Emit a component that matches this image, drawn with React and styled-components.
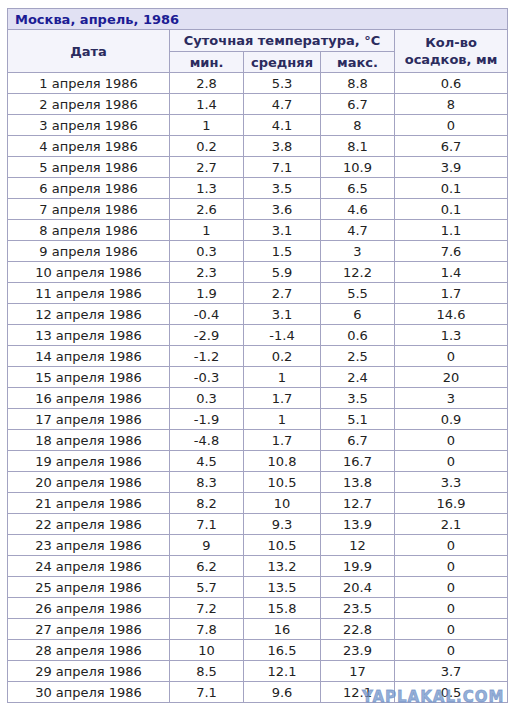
import React from "react";
import styled, { createGlobalStyle } from "styled-components";

const rows = [
  [2.8, 5.3, 8.8, 0.6],
  [1.4, 4.7, 6.7, 8],
  [1, 4.1, 8, 0],
  [0.2, 3.8, 8.1, 6.7],
  [2.7, 7.1, 10.9, 3.9],
  [1.3, 3.5, 6.5, 0.1],
  [2.6, 3.6, 4.6, 0.1],
  [1, 3.1, 4.7, 1.1],
  [0.3, 1.5, 3, 7.6],
  [2.3, 5.9, 12.2, 1.4],
  [1.9, 2.7, 5.5, 1.7],
  [-0.4, 3.1, 6, 14.6],
  [-2.9, -1.4, 0.6, 1.3],
  [-1.2, 0.2, 2.5, 0],
  [-0.3, 1, 2.4, 20],
  [0.3, 1.7, 3.5, 3],
  [-1.9, 1, 5.1, 0.9],
  [-4.8, 1.7, 6.7, 0],
  [4.5, 10.8, 16.7, 0],
  [8.3, 10.5, 13.8, 3.3],
  [8.2, 10, 12.7, 16.9],
  [7.1, 9.3, 13.9, 2.1],
  [9, 10.5, 12, 0],
  [6.2, 13.2, 19.9, 0],
  [5.7, 13.5, 20.4, 0],
  [7.2, 15.8, 23.5, 0],
  [7.8, 16, 22.8, 0],
  [10, 16.5, 23.9, 0],
  [8.5, 12.1, 17, 3.7],
  [7.1, 9.6, 12.1, 0.5],
];

const GlobalStyle = createGlobalStyle`
  body {
    margin: 0;
    background: #fff;
    font-family: Verdana, "DejaVu Sans", sans-serif;
  }
`;

const Page = styled.div`
  position: relative;
  padding: 8px 0 0 7px;
  width: 501px;
`;

const Table = styled.table`
  border-collapse: collapse;
  table-layout: fixed;
  width: 501px;
  border: 1px solid #a3a3c2;
  font-size: 13px;
`;

const Caption = styled.th`
  background: #e1e1f3;
  color: #1c1c94;
  text-align: left;
  font-weight: bold;
  font-size: 13px;
  height: 20px;
  padding: 0 0 0 7px;
  border: 1px solid #a3a3c2;
`;

const Head = styled.th`
  background: #f4f4fb;
  color: #2b2b5e;
  font-weight: bold;
  font-size: 13px;
  height: ${(p) => p.$h || 20}px;
  padding: 0;
  line-height: 17px;
  border: 1px solid #a3a3c2;
`;

const Cell = styled.td`
  text-align: center;
  color: #222;
  height: 20px;
  padding: 0;
  border: 1px solid #a3a3c2;
`;

const Watermark = styled.div`
  position: absolute;
  left: 362px;
  top: 690px;
  font-family: "DejaVu Sans", sans-serif;
  font-weight: 900;
  font-size: 15px;
  line-height: 15px;
  letter-spacing: 1px;
  color: rgba(110, 145, 200, 0.72);
  -webkit-text-stroke: 0.8px rgba(110, 145, 200, 0.72);
  pointer-events: none;
`;

export default function App() {
  return (
    <Page>
      <GlobalStyle />
      <Table>
        <colgroup>
          <col style={{ width: 162 }} />
          <col style={{ width: 74 }} />
          <col style={{ width: 77 }} />
          <col style={{ width: 74 }} />
          <col style={{ width: 113 }} />
        </colgroup>
        <thead>
          <tr>
            <Caption colSpan={5}>Москва, апрель, 1986</Caption>
          </tr>
          <tr>
            <Head rowSpan={2}>Дата</Head>
            <Head colSpan={3} $h={21}>
              Суточная температура, °C
            </Head>
            <Head rowSpan={2}>
              Кол-во
              <br />
              осадков, мм
            </Head>
          </tr>
          <tr>
            <Head>мин.</Head>
            <Head>средняя</Head>
            <Head>макс.</Head>
          </tr>
        </thead>
        <tbody>
          {rows.map((r, i) => (
            <tr key={i}>
              <Cell>{i + 1} апреля 1986</Cell>
              {r.map((v, j) => (
                <Cell key={j}>{v}</Cell>
              ))}
            </tr>
          ))}
        </tbody>
      </Table>
      <Watermark>YAPLAKAL.COM</Watermark>
    </Page>
  );
}
